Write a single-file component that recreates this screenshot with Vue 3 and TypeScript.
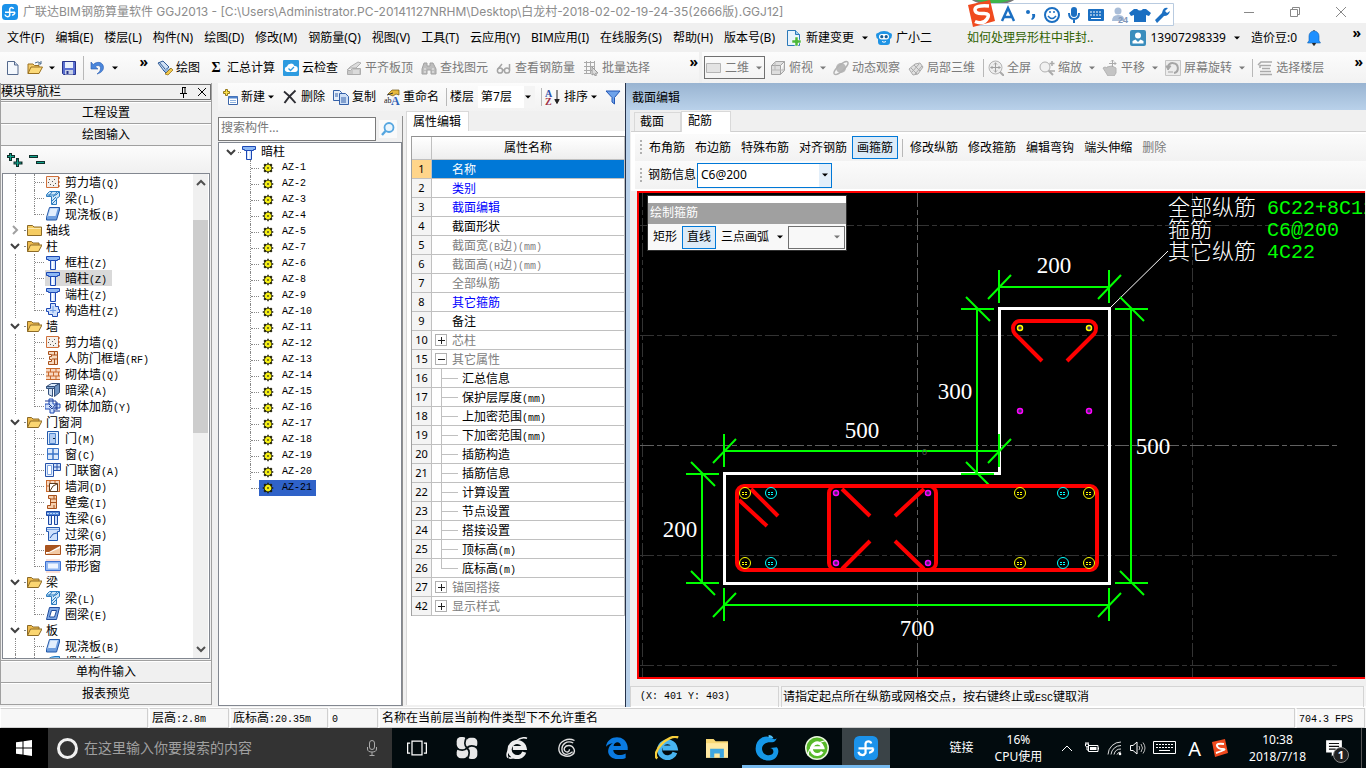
<script setup lang="ts">
import { h, ref } from 'vue'

type Dir = 'h' | 'v'
interface Dim { dir: Dir; at: number; from: number; to: number; label: string; lx: number; ly: number }
interface Node { icon: string; text: string; level: number; open?: boolean; on?: boolean; last?: boolean }
interface Tool { icon?: string; text: string; off?: boolean; arrow?: boolean; sepBefore?: boolean }

/* Inner markup of the 16 x 16 icons */
const icons: Record<string, string> = {
  app: '<rect width="16" height="16" rx="3.500" fill="#1b92ea"/><path d="M11.500 5A2 2 0 0 0 7.700 5v6.300A2.500 2.500 0 0 1 3 10.500M3 8.300h10M12.800 8.300A2.600 2.600 0 0 1 10 11" fill="none" stroke="#fff" stroke-width="1.500"/>',
  doc: '<path d="M2.500 1.500h7l3.500 3.500v9.500H2.500z" fill="#f4f8fd" stroke="#54698c"/><path d="M9.500 1.500V5H13" fill="#cfdced" stroke="#54698c"/>',
  open: '<path d="M1 13.500V4h5l1.500 1.500H12V7" fill="#f4cd6b" stroke="#9b7120"/><path d="M1 13.500 4 7h11.500l-3.500 6.500z" fill="#fbd978" stroke="#9b7120"/><path d="M8 3q3-2.500 6 .5m0-2.500V4h-3" fill="none" stroke="#4a6b8d"/>',
  save: '<path d="M1.500 1.500h13v13h-12l-1-1z" fill="#5a6fd0" stroke="#27348b"/><path d="M4 2h8v6H4z" fill="#e9f0fb"/><path d="M4 10h8v4.500H4z" fill="#c7d0e6"/><path d="M5.500 11h2v3h-2z" fill="#27348b"/>',
  undo: '<path d="M1 2v7h7L5.300 6.700C8 4.500 11 5.500 10.500 9c-.3 2-1.500 3.500-3.500 5 4-1 6.500-3.500 6.500-6.500C13.500 2.500 7.500.5 3.300 4.500z" fill="#4a86dc" stroke="#2a5cb0" stroke-width=".6"/>',
  paint: '<path d="M1 3l5-2 6 6-5 4z" fill="#cfe0f4" stroke="#2d5a96"/><path d="M2 2l6 7" stroke="#2d5a96"/><path d="M6 10l3 3 5-5" fill="#8fb2de" stroke="#2d5a96"/><path d="M14 8l2 2-5 5-3-1z" fill="#f2c84c" stroke="#8c6a10" stroke-width=".7"/>',
  cloud: '<rect width="16" height="16" rx="1" fill="#2d9be0"/><path d="M4 12a2.800 2.800 0 0 1 0-5.500A4 4 0 0 1 11.500 6a3 3 0 0 1 .5 6z" fill="#fff"/><path d="M5.500 8.500l2 2 3.500-3.500" fill="none" stroke="#2d9be0" stroke-width="1.300"/>',
  align: '<path d="M1 10l3-3 8-5 3 1-5 5H4z" fill="#dcdcdc" stroke="#b0b0b0"/><path d="M1.500 14.500v-4h3l2-2h8v6z" fill="#c8c8c8" stroke="#adadad"/><path d="M8 10v4M10 10v4M12 10v4" stroke="#eee"/>',
  binoc: '<path d="M3 3h3v3h3V3h3l3 6v5h-5v-4H6v4H1V9z" fill="#bdbdbd" stroke="#a2a2a2"/><path d="M3 9h2M11 9h2M3 12h2M11 12h2" stroke="#eee"/>',
  glasses: '<g fill="none" stroke="#a4a4a4" stroke-width="1.500"><circle cx="4" cy="10.500" r="2.600"/><circle cx="11" cy="10.500" r="2.600"/><path d="M6.500 10h2M2 9l4-5M13.500 10V4"/></g>',
  batch: '<path d="M1 2.500h11M1 6.500h11M1 10.500h9M3.500 1v13M7.500 1v13M11.500 1v8M1 13.500h7" stroke="#aaa"/><path d="M9 7l6 6-2.500.3 1 2-1.500.5-1-2L9 15z" fill="#ddd" stroke="#999"/>',
  rect: '<path d="M.5 3.500h14v9H.5z" fill="#e3e3e3" stroke="#b5b5b5"/>',
  cube: '<path d="M1.500 5.500h9v9h-9zM1.500 5.500l4-4h9l-4 4M14.500 1.500v9l-4 4" fill="#dedede" stroke="#a4a4a4"/><path d="M5 2v8H1.500M5 10h9" fill="none" stroke="#b8b8b8"/>',
  planet: '<circle cx="8" cy="8" r="5" fill="#b9b9b9"/><ellipse cx="8" cy="8" rx="9" ry="3" transform="rotate(-42 8 8)" fill="none" stroke="#b2b2b2" stroke-width="1.300"/>',
  local: '<path d="M1 9l6-5 5-1 3 4-5 7-5 1z" fill="#e0e0e0" stroke="#aaa"/><path d="M3 8l6 6M6 5l6 6M4 12l7-8M7 14l7-8" stroke="#aaa"/>',
  full: '<circle cx="7.500" cy="7.500" r="6.500" fill="#eee" stroke="#b4b4b4"/><path d="M7.500 2.500v10M2.500 7.500h10M6 4.500 7.500 3 9 4.500M6 10.500 7.500 12 9 10.500M4.500 6 3 7.500 4.500 9M10.500 6 12 7.500 10.500 9" fill="none" stroke="#a0a0a0"/><path d="M12 12l4 4" stroke="#aaa" stroke-width="2"/>',
  zoom: '<circle cx="6" cy="7" r="5" fill="#f1f1f1" stroke="#b0b0b0"/><path d="M9.500 10.500 14 15" stroke="#aaa" stroke-width="2"/><path d="M13 1v5M10.500 3.500h5M11 11h5" stroke="#aaa" stroke-width="1.500"/>',
  pan: '<path d="M1 8q2-2 4 0V7l5-1 4 2v5l-2 3H6z" fill="#c4c4c4" stroke="#b4b4b4"/><path d="M10.500 0v7M7 3.500h7M9 1.500 10.500 0 12 1.500M12.500 2 14 3.500 12.500 5" fill="none" stroke="#aaa"/>',
  rotate: '<path d="M.5.5h15v15H.5z" fill="#ececec" stroke="#c4c4c4"/><path d="M3 7a5 5 0 1 1 6 6" fill="none" stroke="#a5a5a5" stroke-width="2"/><path d="M1 6h5L3 10zM3 12h5" fill="#a5a5a5" stroke="#a5a5a5"/>',
  floors: '<path d="M1 5l3-3h11M3 5.500h11M5 8.500h8M3 11.500h11M3 14.500h12M3 5v3" fill="none" stroke="#aaa" stroke-width="1.500"/>',
  change: '<path d="M1.500.5h8l4 4v11h-12z" fill="#e8f3fc" stroke="#2b79b9"/><path d="M9.500.5v4h4" fill="#9ccbee" stroke="#2b79b9"/><path d="M9 7h3v3h3v3h-3v3H9v-3H6v-3h3z" fill="#4db83a" stroke="#fff" stroke-width=".5"/>',
  owl: '<path d="M0 5q0-2 2-2 2-2 6-2t6 2q2 0 2 2 0 3-2 4v3q0 3-3 3H5q-3 0-3-3V9Q0 8 0 5z" fill="#1f93e4"/><rect x="3" y="4" width="10" height="5.500" rx="2.700" fill="#fff"/><circle cx="5.800" cy="6.700" r="1.600" fill="#155b95"/><circle cx="10.200" cy="6.700" r="1.600" fill="#155b95"/><path d="M6 11.500q2 1.500 4 0" fill="none" stroke="#fff"/>',
  user: '<rect width="16" height="16" rx="2" fill="#3a8dbd"/><circle cx="8" cy="5.500" r="3" fill="#fff"/><path d="M2.500 13.500V11l3-1.500L8 12l2.500-2.500 3 1.500v2.500z" fill="#fff"/>',
  bell: '<path d="M3 10.500V6a5 5 0 0 1 10 0v4.500l1.500 2.500h-13z" fill="#1e90ff" stroke="#1463b0" stroke-width=".6"/><path d="M8 0v1M6.500 13.500h3l-1.500 2z" stroke="#222" fill="#222"/>',
  add: '<path d="M3.500.5h2v2h2v2h-2v2h-2v-2h-2v-2h2z" fill="#ffe34a" stroke="#94791a"/><path d="M6.500 7.500h9v8h-9z" fill="#fff" stroke="#3b65a8"/><path d="M6.500 7.500h9v2h-9z" fill="#4f83cc"/><path d="M8 11.500h6M8 13.500h6" stroke="#8fb3e0"/>',
  del: '<path d="M2 2.500Q8 7 13.500 14M13.500 1.500Q7 7 2.500 14" fill="none" stroke="#2d2d33" stroke-width="1.900"/>',
  copy: '<path d="M.5 1.500h6l2 2v8h-8z" fill="#e4eefb" stroke="#3561a8"/><path d="M6.500 4.500h6l3 3v8h-9z" fill="#cfe0f7" stroke="#3561a8"/><path d="M2 5h3M2 7h3M8 9h5M8 11h5M8 13h5" stroke="#3561a8"/>',
  rename: '<path d="M4 5l4-4h7v5l-3-1-3 2z" fill="#e7b93c" stroke="#6d5410" stroke-width=".7"/><path d="M3 6l6-2" stroke="#333"/><text x="0" y="14" font-size="8" font-family="Liberation Serif, serif" fill="#222">ab</text><text x="7" y="16" font-size="12" font-weight="bold" font-family="Liberation Serif, serif" fill="#2d62b8">A</text>',
  az: '<text x="0" y="7.500" font-size="10" font-weight="bold" font-family="Liberation Serif, serif" fill="#2b4fa8">A</text><text x="0" y="16" font-size="10" font-weight="bold" font-family="Liberation Serif, serif" fill="#a03048">Z</text><path d="M12 1v12M9.800 10.500l2.200 4 2.200-4z" stroke="#222" fill="#222"/>',
  funnel: '<path d="M1 2h14L9.500 8.500V15L7 13V8.500z" fill="#6fa3ea" stroke="#2457b5"/>',
  search: '<circle cx="9" cy="6.500" r="4.500" fill="#eaf5fd" stroke="#55a6e0" stroke-width="1.800"/><path d="M5.500 10 2 14" stroke="#55a6e0" stroke-width="2.400"/>',
  folder: '<path d="M1.500 13.500v-10h5l1.500 1.500h7.500v8.500z" fill="#f5cc62" stroke="#8c6a26"/><path d="M2 6.500h13" stroke="#fde9ae"/>',
  folderOpen: '<path d="M1.500 13.500v-10h4l1.500 1.500h6v2" fill="#eebb4d" stroke="#8c6a26"/><path d="M1.500 13.500 4.500 7h11.500l-3.500 6.500z" fill="#fbd671" stroke="#8c6a26"/>',
  wall: '<path d="M1.500 2.500h12v11h-12z" fill="#f4f0ec" stroke="#d0703a"/><path d="M4 5h1v1H4zM7 7h1v1H7zM5 10h1v1H5zM9 5h1v1H9zM10 9h1v1h-1zM8 11h1v1H8zM3 8h1v1H3z" fill="#555"/><path d="M13 4h2M13 8h2M13 12h2" stroke="#a04010"/>',
  beam: '<path d="M1.500 4.500l3-3h10v5l-3 2v6h-5v-8h-5z" fill="#cde6f8" stroke="#2d7cc0"/><path d="M2 5h9l3-3M3 7l4-5M8 7l4-5M7 11l4-4M7 14l4-4" fill="none" stroke="#2d7cc0"/>',
  slab: '<path d="M4.500 1.500h10l-3 10h-10z" fill="#bed8f8" stroke="#2358a8"/><path d="M1.500 11.500v2.500h10l3-10V1.500" fill="#6f9fe0" stroke="#2358a8"/><path d="M5.500 3h7l-2 7h-7z" fill="#e3effd"/>',
  column: '<path d="M1.500 2.500h13v3h-2v1h-9v-1h-2z" fill="#8db8f5" stroke="#1c48b4"/><path d="M5.500 6.500h5v9h-5z" fill="#cfe1fc" stroke="#1c48b4"/><path d="M7 7h1.500v8H7z" fill="#fff"/>',
  gz: '<path d="M5.500 1.500h5v3h3v3h1v3h-2v4h-5v-2h-4v-3h-2v-3h4z" fill="#cfe0fb" stroke="#1c48b4"/><path d="M8 4v7M5 8.500h6" stroke="#6f9be6"/>',
  rf: '<path d="M3.500 1.500h9v13h-9v-3h3v-2h-2v-3h2v-2h-3z" fill="#f6d9bf" stroke="#a8501a"/><path d="M7 5h5M7 9h5M9.500 2v3M9.500 9v5" stroke="#a8501a"/>',
  brick: '<path d="M1 2h14v12H1z" fill="#f8d8c0"/><path d="M1 2.500h14M1 6h14M1 10h14M1 13.500h14M5.500 3v3M11 3v3M3.500 6v4M8.500 6v4M13.500 6v4M5.500 10v4M11 10v4" stroke="#c8692c"/>',
  dbeam: '<path d="M1.500 4.500l5-3h8l-5 3z" fill="#dcebfb" stroke="#334e78"/><path d="M1.500 4.500h8v2h-8z" fill="#86a9d2" stroke="#334e78"/><path d="M3.500 6.500h4v8l-4-2z" fill="#cfe0f4" stroke="#334e78"/><path d="M9.500 4.500l5-3v9l-5 4z" fill="#6e93c2" stroke="#334e78"/>',
  rebar: '<path d="M4 1h4v5h7v4H9v5H5v-4H0V6h4z" fill="#cfe0fb" stroke="#1c48b4"/><path d="M0 3h11v9M4 8l3 3 3-4M4 6l3 3M12 4v8M9 13h6" fill="none" stroke="#1c3a94"/>',
  door: '<path d="M2.500 1.500h11v13h-11z" fill="#e6f0fd" stroke="#2358a8"/><path d="M4.500 3.500h6v10h-6z" fill="#b3cdf3" stroke="#4f86d0"/><path d="M8 8.500h2" stroke="#123"/>',
  win: '<path d="M2.500 2.500h11v11h-11z" fill="#dce9fb" stroke="#3b74c8"/><path d="M8 2v12M2 8h12" stroke="#3b74c8" stroke-width="1.500"/>',
  dwin: '<path d="M.5 1.500h8v13h-8z" fill="#e6f0fd" stroke="#2450a8"/><path d="M2.500 3.500h4v9h-4z" fill="#fff" stroke="#7fa6e3"/><path d="M8.500 1.500h7v7h-7zM12 1.500v7M8.500 5h7" fill="#cfe0fb" stroke="#2450a8"/>',
  hole: '<path d="M1 2h14v12H1z" fill="#f8d8c0"/><path d="M1 2.500h14M1 13.500h14M1.500 2v12M14.500 2v12M5 2v3M10 2v3M1 8h3" stroke="#c8692c"/><path d="M4.500 5.500h8v8h-8zM5 13l3-5 4-2" fill="#fff" stroke="#5b3a1c"/>',
  niche: '<path d="M3.500 1.500h8v13h-9v-3h3v-7h-2z" fill="#f6d0ae" stroke="#a8501a"/><path d="M6 5h6M6 8.500h6M9 1.500V5M9 11v3" stroke="#a8501a"/>',
  lbeam: '<path d="M1.500 1.500h13v4h-13z" fill="#4f86d8" stroke="#1c48a4"/><path d="M3.500 5.500h3v9h-3zM9.500 5.500h3v9h-3z" fill="#cfe1fc" stroke="#1c48a4"/><path d="M2 3.500h12" stroke="#b9d3f8" stroke-dasharray="2 1"/>',
  gbeam: '<path d="M1.500 1.500h13v4h-2v9h-9v-9h-2z" fill="#cfe1fc" stroke="#2358b0"/><path d="M2 3.500h12" stroke="#7fa6e3"/><path d="M5 12l3-4 4-1" fill="none" stroke="#2358b0"/>',
  shole: '<path d="M.5 3.500h15v9H.5z" fill="#fff" stroke="#a8501a"/><path d="M1 4h14L4 10H1z" fill="#a9551f"/><path d="M6 10l9-4v6H1z" fill="#f2c9a4"/>',
  swin: '<path d="M1 1h14v14H1z" fill="#fbdfd6"/><path d="M.5 3.500h15v9H.5z" fill="#8fb6f2" stroke="#3b6fd0"/><path d="M3 5.500h10v5H3z" fill="#eef5ff"/>',
  ring: '<path d="M4.500 1.500h10l-3 12h-10z" fill="#7fa9e6" stroke="#1f4c9c"/><path d="M6.500 4.500h5l-2 6.500h-5z" fill="#fff" stroke="#1f4c9c"/>',
  spiral: '<path d="M1 10Q2 3 10 2.500h4.500v4Q8 6 6 12z" fill="#8cc7f4" stroke="#2078c0"/>',
  gear: '<path d="M7 1h2v2h2l1-1 2 2-1 1v2h2v2h-2v2l1 1-2 2-1-1H9v2H7v-2H5l-1 1-2-2 1-1V9H1V7h2V5L2 4l2-2 1 1h2z" fill="#1a1a00"/><path d="M6 4h4l2 2v4l-2 2H6l-2-2V6z" fill="#f6f014"/><path d="M7 7h2v2H7z" fill="#222"/><path d="M8 3v2M8 11v2M3 8h2M11 8h2" stroke="#f6f014"/>',
  plus: '<path d="M3.500 1v8M0 4.500h8M10.500 6v9M6.500 11h9" stroke="#10302c" stroke-width="3"/><path d="M3.500 2v6M1 4.500h6M10.500 7.500v6.500M7.500 11H14" stroke="#12a38c"/>',
  minus: '<path d="M0 4.500h9M7 10.500h9" stroke="#10302c" stroke-width="3"/><path d="M1 4.500h7M8 10.500h7" stroke="#12a38c"/>',
  win10: '<path d="M0 2.300 6.500 1.400V7.500H0zM7.500 1.200 16 0v7.500H7.500zM0 8.500h6.500v6.100L0 13.700zM7.500 8.500H16V16l-8.500-1.200z" fill="#fff"/>',
  mic: '<rect x="5.500" y=".5" width="5" height="9" rx="2.500" fill="none" stroke="#aaa"/><path d="M3.500 7v2q0 3 4.500 3t4.500-3V7M8 12v3.500M5.500 15.500h5" fill="none" stroke="#aaa"/>',
  taskview: '<path d="M4 2.500h8v11H4zM2.500 4H.5v8h2M13.500 4h2v8h-2" fill="none" stroke="#fff" stroke-width="1"/>',
  pinwheel: '<rect x=".5" width="7.500" height="8.500" rx="3" fill="#e8e8e8"/><rect x="7.500" y=".5" width="8" height="7.500" rx="3" fill="#e8e8e8"/><rect x="8" y="7.500" width="7.500" height="8.500" rx="3" fill="#e8e8e8"/><rect x=".5" y="8" width="8" height="7.500" rx="3" fill="#e8e8e8"/><path d="M8 8Q5 5.500 7.700 0M8 8Q10.500 5 16 7.700M8 8Q11 10.500 8.300 16M8 8Q5.500 11 0 8.300" fill="none" stroke="#071114" stroke-width="1.200"/>',
  ewhite: '<path d="M13.300 11A5.500 5.500 0 1 1 13.500 8H5" fill="none" stroke="#eee" stroke-width="3"/><path d="M1.500 15C-2 11 9-2 15.300 1M2 15q2 1 5-1" fill="none" stroke="#eee" stroke-width="1.200"/>',
  swirl: '<path d="M14 2C9-.5 2 2 1.500 8S8 16 12 13.500 13 6 9.500 6 5 9 6.500 10.500 10 11 10 9M13 4C8 1.500 3.500 5 4 9.500S9 14 12.500 11" fill="none" stroke="#e0e0e0" stroke-width="1.100"/>',
  edge: '<path d="M0 7C1-2 15-2.500 15.800 7.500V9.500H5.300c.3 4 5 4.500 9 2.500v3.200C8 18-.5 15 2 8c1-2.500 3-3.500 3-3.500S2 4.800 0 7zM5.500 6.500h5.300C10.700 3 6 3 5.500 6.500z" fill="#0a7ae0"/>',
  ie: '<path d="M13.300 11A5.300 5.300 0 1 1 13.500 8H5" fill="none" stroke="#48b4f0" stroke-width="3.200"/><path d="M1.500 15C-3 11 9-2 15.500 1" fill="none" stroke="#f8cf3c" stroke-width="1.600"/>',
  explorer: '<path d="M0 1.500h5.500L7 3h9v12H0z" fill="#f7d775"/><path d="M0 4.500h16V15H0z" fill="#ffe9a2"/><path d="M3 15V8.500h10V15h-3v-3H6v3z" fill="#3ea6e0"/>',
  glodon: '<path d="M12 2.500Q9 0 5 1.500 1 3.500 1 8.500c0 5 5 8 9.500 7S16 9 14 7.500L10 8c2.500.5 2.500 3.500.5 4.200S5.500 12 5 9s2.500-5 6-4.500q2 .2 3-2.500-1 .8-2 .5z" fill="#1597e8"/><path d="M9 0q2 0 3 2l-3-.5z" fill="#54c4f8"/>',
  egreen: '<circle cx="8" cy="8" r="7.500" fill="#57b929" stroke="#e8f5dd"/><path d="M11.500 10.500A3.900 3.900 0 1 1 12 7.900H5" fill="none" stroke="#fff" stroke-width="2"/><path d="M2 13Q2 6 14 3" fill="none" stroke="#fff" stroke-width=".8"/>',
  power: '<path d="M4.500 5.500H14v6H4.500zM14.500 7.500v2M1 4h4M2 2v2M4 2v2M1.500 4v2l1.500 1 1.500-1V4M3 7v3h1" fill="none" stroke="#fff"/><path d="M6 7h6.500v3H6z" fill="#fff"/>',
  wifi: '<path d="M1 14.500A13 13 0 0 1 14 2M4 14.500A10 10 0 0 1 14 5.500M7 14.500A7 7 0 0 1 14 9M10 14.500A4 4 0 0 1 14 12" fill="none" stroke="#ddd"/><circle cx="13" cy="14" r="1.300" fill="#fff"/>',
  sound: '<path d="M.5 5.500h2.500l4-3.500v12L3 10.500H.5z" fill="none" stroke="#fff"/><path d="M9 6q1.500 2 0 4M11 4q3 4 0 8M13 2.500q4 5.500 0 11" fill="none" stroke="#bbb"/>',
  note: '<path d="M1 1h14v11H9l-3 3.500V12H1z" fill="#fff"/><path d="M3.500 4h9M3.500 6.500h9M3.500 9h6" stroke="#111"/>'
}

const Icon = (p: { n: string; s?: number }) =>
  h('svg', { class: 'ico', viewBox: '0 0 16 16', width: p.s ?? 16, height: p.s ?? 16, innerHTML: icons[p.n], 'aria-hidden': 'true' })
Icon.props = ['n', 's']

/* Sets Latin runs in the half-width face beside full-width characters */
const Mix = (p: { t: string }) =>
  h('span', { class: 'mix' }, (p.t.match(/[\x20-\x7e]+|[^\x20-\x7e]+/g) ?? []).map(r => h('span', { class: r.charCodeAt(0) < 127 ? 'half' : 'wide' }, r)))
Mix.props = ['t']

const Caret = () => h('svg', { class: 'caret', width: 6, height: 4, viewBox: '0 0 6 4' }, [h('path', { d: 'M0 .5h6L3 3.500z', fill: 'currentColor' })])

const menus = ['文件(F)', '编辑(E)', '楼层(L)', '构件(N)', '绘图(D)', '修改(M)', '钢筋量(Q)', '视图(V)', '工具(T)', '云应用(Y)', 'BIM应用(I)', '在线服务(S)', '帮助(H)', '版本号(B)']
const drawTools: Tool[] = [
  { icon: 'paint', text: '绘图' }, { icon: 'sigma', text: '汇总计算' }, { icon: 'cloud', text: '云检查' },
  { icon: 'align', text: '平齐板顶', off: true }, { icon: 'binoc', text: '查找图元', off: true },
  { icon: 'glasses', text: '查看钢筋量', off: true }, { icon: 'batch', text: '批量选择', off: true }
]
const viewTools: Tool[] = [
  { icon: 'cube', text: '俯视', arrow: true }, { icon: 'planet', text: '动态观察' }, { icon: 'local', text: '局部三维' },
  { icon: 'full', text: '全屏', sepBefore: true }, { icon: 'zoom', text: '缩放', arrow: true }, { icon: 'pan', text: '平移', arrow: true },
  { icon: 'rotate', text: '屏幕旋转', arrow: true }, { icon: 'floors', text: '选择楼层', sepBefore: true }
]
const n = (icon: string, text: string, extra: Partial<Node> = {}): Node => ({ icon, text, level: 1, ...extra })
const g = (text: string, open = true): Node => ({ icon: open ? 'folderOpen' : 'folder', text, level: 0, open })
const tree: Node[] = [
  n('wall', '剪力墙(Q)'), n('beam', '梁(L)'), n('slab', '现浇板(B)', { last: true }),
  g('轴线', false), g('柱'),
  n('column', '框柱(Z)'), n('column', '暗柱(Z)', { on: true }), n('column', '端柱(Z)'), n('gz', '构造柱(Z)', { last: true }),
  g('墙'),
  n('wall', '剪力墙(Q)'), n('rf', '人防门框墙(RF)'), n('brick', '砌体墙(Q)'), n('dbeam', '暗梁(A)'), n('rebar', '砌体加筋(Y)', { last: true }),
  g('门窗洞'),
  n('door', '门(M)'), n('win', '窗(C)'), n('dwin', '门联窗(A)'), n('hole', '墙洞(D)'), n('niche', '壁龛(I)'), n('lbeam', '连梁(G)'), n('gbeam', '过梁(G)'), n('shole', '带形洞'), n('swin', '带形窗', { last: true }),
  g('梁'), n('beam', '梁(L)'), n('ring', '圈梁(E)', { last: true }),
  g('板'), n('slab', '现浇板(B)'), n('spiral', '螺旋板(B)')
]
const parts = [1, 2, 3, 4, 5, 7, 6, 8, 9, 10, 11, 12, 13, 14, 15, 16, 17, 18, 19, 20, 21]
const selectedPart = ref(21)

interface Prop { no: number; text: string; kind?: 'key' | 'dim' | 'sel'; box?: '+' | '-'; sub?: boolean; end?: boolean }
const props: Prop[] = [
  { no: 1, text: '名称', kind: 'sel' }, { no: 2, text: '类别', kind: 'key' }, { no: 3, text: '截面编辑', kind: 'key' }, { no: 4, text: '截面形状' },
  { no: 5, text: '截面宽(B边)(mm)', kind: 'dim' }, { no: 6, text: '截面高(H边)(mm)', kind: 'dim' }, { no: 7, text: '全部纵筋', kind: 'dim' },
  { no: 8, text: '其它箍筋', kind: 'key' }, { no: 9, text: '备注' }, { no: 10, text: '芯柱', kind: 'dim', box: '+' }, { no: 15, text: '其它属性', kind: 'dim', box: '-' },
  ...['汇总信息', '保护层厚度(mm)', '上加密范围(mm)', '下加密范围(mm)', '插筋构造', '插筋信息', '计算设置', '节点设置', '搭接设置', '顶标高(m)', '底标高(m)']
    .map((text, i): Prop => ({ no: 16 + i, text, sub: true, end: i === 10 })),
  { no: 27, text: '锚固搭接', kind: 'dim', box: '+' }, { no: 42, text: '显示样式', kind: 'dim', box: '+' }
]
const rebarTools = ['布角筋', '布边筋', '特殊布筋', '对齐钢筋', '画箍筋', '修改纵筋', '修改箍筋', '编辑弯钩', '端头伸缩', '删除']

/* Section drawing */
const dims: Dim[] = [
  { dir: 'h', at: 94, from: 360, to: 470, label: '200', lx: 415, ly: 80 },
  { dir: 'v', at: 338, from: 116, to: 281, label: '300', lx: 316, ly: 206 },
  { dir: 'h', at: 258, from: 85, to: 360, label: '500', lx: 223, ly: 245 },
  { dir: 'v', at: 492, from: 116, to: 390, label: '500', lx: 514, ly: 261 },
  { dir: 'v', at: 63, from: 281, to: 390, label: '200', lx: 41, ly: 344 },
  { dir: 'h', at: 412, from: 85, to: 470, label: '700', lx: 278, ly: 443 }
]
const dimPath = (d: Dim) => {
  const ends = [d.from, d.to]
  return d.dir === 'h'
    ? `M${d.from} ${d.at}H${d.to}` + ends.map(x => `M${x} ${d.at - 17}v33M${x - 11} ${d.at + 12}l23-24`).join('')
    : `M${d.at} ${d.from}V${d.to}` + ends.map(y => `M${d.at - 16} ${y}h33M${d.at - 11} ${y - 12}l24 24`).join('')
}
const bars = [106, 132, 381, 424, 450].flatMap((x, i) => [300, 370].map(y => ({ x, y, c: i === 1 || i === 3 ? '#00ffff' : '#ffff00' })))
const dots = [
  { x: 381, y: 135, c: '#ffff00' }, { x: 450, y: 135, c: '#ffff00' }, { x: 381, y: 218, c: '#ff00ff' }, { x: 450, y: 218, c: '#ff00ff' },
  ...[197, 289].flatMap(x => [300, 370].map(y => ({ x, y, c: '#ff00ff' })))
]
const gridY = [32, 142, 362, 472]
</script>

<template>
  <div class="screen">
    <header class="title">
      <Icon n="app" />
      <span class="caption">广联达BIM钢筋算量软件 GGJ2013 - [C:\Users\Administrator.PC-20141127NRHM\Desktop\白龙村-2018-02-02-19-24-35(2666版).GGJ12]</span>
      <div class="winbtns">
        <button aria-label="最小化"><svg width="12" height="12"><path d="M1 6.500h10" /></svg></button>
        <button aria-label="还原"><svg width="12" height="12"><path d="M1.500 3.500h7v7h-7zM3.500 3.500v-2h7v7h-2" /></svg></button>
        <button aria-label="关闭"><svg width="12" height="12"><path d="M1 1l10 10M11 1L1 11" /></svg></button>
      </div>
      <div class="ime">
        <svg width="208" height="27" viewBox="0 0 208 27">
          <ellipse cx="25" cy="-6" rx="24" ry="10" fill="#3db54a" stroke="#777" stroke-width="2" />
          <path d="M8.500 3.500h197v22H8.500z" fill="#fff" stroke="#b9cbe0" />
          <path d="M0 5 22 0l5 21-22 6z" fill="#f04a1e" />
          <path d="M21 6Q7 5 7 9.500t8 4 4 5.500-12 2.500" fill="none" stroke="#fff" stroke-width="3.500" />
          <g fill="none" stroke="#1b6fc2" stroke-width="2">
            <path d="M34 21 40 8l6 13M36 17h8" stroke-width="2.500" />
            <circle cx="84" cy="15" r="7" /><path d="M80 16q4 5 8 0" stroke-width="1.500" />
            <path d="M101 13q0 6 5 6t5-6M106 19v4" />
          </g>
          <g fill="#1b6fc2">
            <circle cx="60" cy="12" r="2" /><path d="M64 14h3q1 4-3 6l-1-1q2-1 1-5z" />
            <circle cx="82" cy="12" r="1" /><circle cx="86" cy="12" r="1" />
            <rect x="103" y="7" width="6" height="10" rx="3" />
            <rect x="120" y="9" width="16" height="12" rx="1" />
            <path d="M169 9h-3l-5 4 2 3 3-1v7h12v-7l3 1 2-3-5-4h-3q-3 3-6 0z" />
            <path d="M200 8q-5-1-6 5l-7 7 2 3 7-7q5 0 6-5l-3 2-2-2z" />
          </g>
          <path d="M122 12h12M122 15h12" stroke="#fff" stroke-dasharray="2 1" /><path d="M123 18.500h10" stroke="#fff" />
          <g fill="#a9bdd8"><circle cx="150" cy="11" r="3.500" /><path d="M144 21q0-6 6-6t6 4v2z" /></g>
          <text x="150" y="23" class="imenum">24</text>
        </svg>
      </div>
    </header>

    <nav class="menu">
      <button v-for="m in menus" :key="m">{{ m }}</button>
      <button class="withicon"><Icon n="change" />新建变更<Caret /></button>
      <button class="withicon owl"><Icon n="owl" />广小二</button>
      <a href="#" class="tip">如何处理异形柱中非封..</a>
      <button class="withicon acct"><Icon n="user" />13907298339<Caret /></button>
      <span class="bean">造价豆:0</span>
      <button aria-label="消息"><Icon n="bell" /></button>
      <span class="more">»</span>
    </nav>

    <div class="bars">
      <div class="bar file">
        <button aria-label="新建"><Icon n="doc" /></button>
        <button aria-label="打开"><Icon n="open" /></button><Caret />
        <button aria-label="保存"><Icon n="save" /></button><i class="sep tall" />
        <button aria-label="撤销"><Icon n="undo" /></button><Caret />
        <span class="more">»</span>
      </div>
      <div class="bar draw">
        <button v-for="t in drawTools" :key="t.text" :class="{ off: t.off }">
          <b v-if="t.icon === 'sigma'" class="sigma">Σ</b><Icon v-else :n="t.icon!" />{{ t.text }}
        </button>
        <span class="more">»</span>
      </div>
      <div class="bar view">
        <button class="combo off"><Icon n="rect" />二维<Caret /></button>
        <template v-for="t in viewTools" :key="t.text">
          <i v-if="t.sepBefore" class="sep" />
          <button class="off"><Icon :n="t.icon!" />{{ t.text }}<Caret v-if="t.arrow" /></button>
        </template>
        <span class="more">»</span>
      </div>
    </div>

    <main class="work">
      <aside class="nav">
        <div class="navhead">
          <span>模块导航栏</span>
          <svg width="28" height="12"><path d="M3.500 1v6M1 7.500h7M6 1v6M4 1.500h3M4.500 8v4" stroke="#000" fill="none" /><path d="M19 2l8 8M27 2l-8 8" stroke="#000" /></svg>
        </div>
        <button class="section">工程设置</button>
        <button class="section">绘图输入</button>
        <div class="expand"><Icon n="plus" /><Icon n="minus" /></div>
        <div class="treebox">
          <ul class="tree" role="tree">
            <li v-for="(t, i) in tree" :key="i" :class="['l' + t.level, { on: t.on, last: t.last }]" role="treeitem">
              <span v-if="t.level" class="stem"><i /></span>
              <svg v-else class="chev" :class="{ shut: !t.open }" width="10" height="8"><path d="M1 2l4 4 4-4" /></svg>
              <span class="leaf"><Icon :n="t.icon" /><Mix :t="t.text" /></span>
            </li>
          </ul>
          <div class="scroll">
            <svg width="10" height="8"><path d="M1 6l4-4 4 4" /></svg>
            <span class="thumb" />
            <svg width="10" height="8"><path d="M1 2l4 4 4-4" /></svg>
          </div>
        </div>
        <button class="section">单构件输入</button>
        <button class="section">报表预览</button>
      </aside>

      <section class="mid">
        <div class="parttools">
          <button><Icon n="add" />新建<Caret /></button>
          <button><Icon n="del" />删除</button>
          <button><Icon n="copy" />复制</button>
          <button><Icon n="rename" />重命名</button>
          <i class="sep" />
          <label for="floor">楼层</label>
          <span class="pick"><select id="floor"><option>第7层</option></select><Caret /></span>
          <i class="sep" />
          <button><Icon n="az" />排序<Caret /></button>
          <button aria-label="过滤"><Icon n="funnel" /></button>
        </div>
        <div class="cols">
          <div class="parts">
            <div class="find"><input type="text" placeholder="搜索构件..." aria-label="搜索构件"><button aria-label="搜索"><Icon n="search" /></button></div>
            <div class="partbox">
              <div class="root"><svg class="chev" width="10" height="8"><path d="M1 2l4 4 4-4" /></svg><i /><Icon n="column" /><span>暗柱</span></div>
              <ul>
                <li v-for="p in parts" :key="p" :class="{ on: p === selectedPart, last: p === 21 }" @click="selectedPart = p">
                  <i /><span><Icon n="gear" :s="12" />AZ-{{ p }}</span>
                </li>
              </ul>
            </div>
          </div>
          <div class="props">
            <div class="ptabs"><button>属性编辑</button></div>
            <div class="pwrap">
              <table>
                <thead><tr><th class="no" /><th>属性名称</th></tr></thead>
                <tbody>
                  <tr v-for="p in props" :key="p.no" :class="[p.kind, { sub: p.sub, end: p.end }]">
                    <td class="no">{{ p.no }}</td>
                    <td class="name"><i v-if="p.box" class="box" :class="{ plus: p.box === '+' }" /><i v-if="p.sub" class="branch" /><Mix :t="p.text" /></td>
                  </tr>
                </tbody>
              </table>
            </div>
          </div>
        </div>
      </section>

      <section class="editor">
        <h2>截面编辑</h2>
        <div class="etabs"><button>截面</button><button class="cur">配筋</button></div>
        <div class="etools">
          <div class="row">
            <i class="grip" />
            <template v-for="t in rebarTools" :key="t">
              <button :class="{ cur: t === '画箍筋', off: t === '删除' }">{{ t }}</button>
              <i v-if="t === '画箍筋'" class="sep" />
            </template>
          </div>
          <div class="row info">
            <i class="grip" />
            <label for="bar">钢筋信息</label>
            <span class="pick"><select id="bar"><option>C6@200</option></select><Caret /></span>
          </div>
        </div>
        <div class="canvas">
          <svg class="drawing">
            <g class="axis">
              <path v-for="y in gridY" :key="y" :d="`M1 ${y}.5H700`" />
              <path d="M3.500 0V485M553.500 0V485" />
              <path class="main" d="M1 252.500H700M278.500 0V485" />
            </g>
            <path class="wallline" d="M85.500 280.500H360.500V115.500H470.500V390.500H85.500Z" />
            <path class="lead" d="M471 115L529 58" />
            <path v-for="(d, i) in dims" :key="i" class="dim" :d="dimPath(d)" />
            <g class="stirrup">
              <rect x="98" y="293" width="360" height="84" rx="7" />
              <rect x="190" y="293" width="107" height="84" rx="7" />
              <path d="M112 296L139 323M100 307L128 333M203 296L231 323M285 296L256 323M231 348L203 376M256 348L285 376" />
              <path d="M403 168L376 141Q374 139 374 135A7 7 0 0 1 381 128H450A7 7 0 0 1 457 135Q457 139 455 141L428 168" />
            </g>
            <g v-for="(b, i) in bars" :key="'b' + i" :stroke="b.c" fill="none">
              <circle :cx="b.x" :cy="b.y" r="5.500" />
              <path :d="`M${b.x - 3} ${b.y - 1}.5h6M${b.x - 3} ${b.y + 1}.5h6`" stroke-dasharray="2 1" />
            </g>
            <circle v-for="(d, i) in dots" :key="'d' + i" :cx="d.x" :cy="d.y" r="2.500" :stroke="d.c" stroke-width="1.500" fill="#403060" />
            <text x="283" y="262" class="origin">0</text>
            <g class="num"><text v-for="(d, i) in dims" :key="i" :x="d.lx" :y="d.ly">{{ d.label }}</text></g>
            <g class="notes">
              <text x="529" y="22">全部纵筋</text><text x="529" y="44">箍筋</text><text x="529" y="66">其它纵筋</text>
              <g class="spec"><text x="628" y="21">6C22+8C12</text><text x="628" y="43">C6@200</text><text x="628" y="65">4C22</text></g>
            </g>
          </svg>
          <div class="palette">
            <div class="ptitle">绘制箍筋</div>
            <div class="pbody">
              <button>矩形</button><button class="cur">直线</button><button>三点画弧<Caret /></button>
              <span class="pick"><select aria-label="画弧方式"><option /></select><Caret /></span>
            </div>
          </div>
        </div>
        <footer class="estatus"><span class="half">(X: 401 Y: 403)</span><Mix t="请指定起点所在纵筋或网格交点，按右键终止或ESC键取消" /></footer>
      </section>
    </main>

    <footer class="status">
      <span /><Mix t="层高:2.8m" /><Mix t="底标高:20.35m" /><Mix t="0" /><Mix t="名称在当前层当前构件类型下不允许重名" /><Mix t="704.3 FPS" />
    </footer>

    <footer class="taskbar">
      <button class="start" aria-label="开始"><Icon n="win10" /></button>
      <label class="tsearch"><i class="cortana" /><input type="text" placeholder="在这里输入你要搜索的内容" aria-label="搜索"><Icon n="mic" /></label>
      <div class="apps">
        <button aria-label="任务视图"><Icon n="taskview" :s="20" /></button>
        <button aria-label="风车"><Icon n="pinwheel" :s="22" /></button>
        <button aria-label="浏览器"><Icon n="ewhite" :s="22" /></button>
        <button aria-label="旋涡"><Icon n="swirl" :s="20" /></button>
        <button aria-label="Edge"><Icon n="edge" :s="22" /></button>
        <button aria-label="IE"><Icon n="ie" :s="24" /></button>
        <button aria-label="资源管理器"><Icon n="explorer" :s="22" /></button>
        <button class="run" aria-label="广联达"><Icon n="glodon" :s="26" /></button>
        <button class="run" aria-label="安全浏览器"><Icon n="egreen" :s="24" /></button>
        <button class="run now" aria-label="钢筋算量"><Icon n="app" :s="24" /></button>
      </div>
      <div class="tray">
        <span class="link">链接</span>
        <span class="two cpu">16%<br>CPU使用</span>
        <svg class="up" width="12" height="8"><path d="M1 7l5-5 5 5" fill="none" stroke="#fff" /></svg>
        <Icon n="power" /><Icon n="wifi" /><Icon n="sound" />
        <svg class="kbd" width="24" height="14"><path d="M.5.5h22v12H.5z" fill="none" stroke="#fff" /><path d="M3 3.500h17M3 6.500h17" stroke="#fff" stroke-dasharray="2 1" /><path d="M6 9.500h11" stroke="#fff" /></svg>
        <span class="lang">A</span>
        <svg class="sg" width="16" height="18"><path d="M0 3l13-3 3 14-13 4z" fill="#f04a1e" /><path d="M12 5Q4 4 5 7t6 3-7 4" fill="none" stroke="#fff" stroke-width="2" /></svg>
        <span class="two clock">10:38<br>2018/7/18</span>
        <span class="bell"><Icon n="note" :s="18" /><b>1</b></span>
      </div>
    </footer>
  </div>
</template>

<style>
html, body { margin: 0; background: #f0f0f0; overflow: hidden; }
.ico { flex: none; display: block; }
.caret { flex: none; display: block; }
.half { font: 10px/10px "Liberation Mono", monospace; white-space: pre; }
.wide { font: 12px/16px "Noto Sans CJK SC", sans-serif; }
.mix { white-space: nowrap; line-height: 16px; }
</style>

<style scoped>
.screen { display: flex; flex-direction: column; height: 100vh; overflow: hidden; background: #f0f0f0; color: #000; font: 12px/16px "Noto Sans", "Noto Sans CJK SC", sans-serif; white-space: nowrap; }
button { display: flex; align-items: center; margin: 0; padding: 0; border: 0; background: none; color: inherit; font: inherit; white-space: nowrap; }
ul { list-style: none; margin: 0; padding: 0; }
select, input { font: inherit; color: inherit; border-radius: 0; }
select { appearance: none; width: 100%; height: 100%; margin: 0; padding: 0 3px; border: 0; background: none; }
.sep { flex: none; width: 1px; height: 18px; background: #b8b8b8; }
.off { color: #7a7a7a; }

.title { position: relative; flex: none; display: flex; align-items: center; gap: 5px; height: 23px; padding-left: 2px; background: #fff; color: #8c8c8c; }
.caption { font-family: Inter, "Noto Sans CJK SC", sans-serif; }
.winbtns { display: flex; gap: 34px; margin-left: auto; padding-right: 19px; }
.winbtns svg { display: block; fill: none; stroke: #888; }
.ime { position: absolute; top: 0; right: 190px; z-index: 3; height: 27px; overflow: hidden; }
.ime svg { display: block; }
.imenum { font: bold 9px "Liberation Sans", sans-serif; fill: #7f97ba; }

.menu { flex: none; display: flex; align-items: center; gap: 11px; height: 29px; padding-left: 7px; }
.withicon { gap: 4px; }
.withicon .caret { margin-left: 4px; }
.owl { margin-left: -3px; }
.tip { margin-left: 24px; color: #2f6200; text-decoration: none; }
.acct { margin-left: 26px; }
.bean { margin-right: -2px; }
.more { margin-left: auto; align-self: flex-start; font: bold 14px/20px "Noto Sans", sans-serif; }
.menu .more { padding-right: 5px; }

.bars { flex: none; display: flex; height: 31px; }
.bar { display: flex; align-items: center; gap: 8px; background: linear-gradient(#fcfcfc, #f2f2f2); }
.bar button { gap: 3px; }
.file { flex: none; width: 143px; gap: 6px; padding: 0 3px 0 5px; }
.tall { height: 24px; }
.draw { flex: none; width: 541px; padding: 0 1px 0 6px; }
.sigma { width: 16px; font: bold 14px/16px "Liberation Serif", serif; text-align: center; }
.view { flex: 1; min-width: 0; padding: 0 3px 0 2px; margin-left: 3px; }
.view .caret { margin: 0 -1px 0 4px; }
.view .combo { height: 23px; margin-right: -3px; padding: 0 3px 0 1px; border: 1px solid #707070; }
.view .sep { margin-right: -4px; }

.work { flex: 1; min-height: 0; display: flex; }
.nav { flex: none; width: 210px; display: flex; flex-direction: column; border: 1px solid #a0a0a0; border-width: 0 1px 1px; margin-bottom: 2px; }
.navhead { display: flex; align-items: center; justify-content: space-between; height: 14px; margin: 1px 0; padding-right: 3px; border: 1px solid #707070; border-left: 0; line-height: 14px; }
.section { flex: none; justify-content: center; height: 22px; border-top: 1px solid #a0a0a0; background: #f0f0f0; box-shadow: inset 0 1px #fff; }
.expand { flex: none; display: flex; align-items: center; gap: 6px; height: 27px; padding-left: 6px; border-top: 1px solid #a0a0a0; background: linear-gradient(#fcfcfc, #f0f0f0); }
.treebox { flex: 1; min-height: 0; display: flex; margin: 0 1px 1px; border: 1px solid #828790; background: #fff; }
.tree { flex: 1; overflow: hidden; }
.tree li { display: flex; align-items: center; height: 16px; }
.leaf { display: flex; align-items: center; gap: 4px; height: 16px; padding-right: 5px; }
.l0 .leaf { gap: 4px; padding-left: 2px; background: linear-gradient(#888, #888) 0 8px / 2px 1px no-repeat; }
.on .leaf { background: #d9d9d9; }
.chev { flex: none; width: 10px; margin: 0 4px 0 7px; fill: none; stroke: #404040; stroke-width: 2; }
.shut { transform: rotate(-90deg); stroke: #a0a0a0; }
.stem { flex: none; position: relative; box-sizing: border-box; width: 30px; height: 16px; margin-left: 12px; border-left: 1px dotted #888; }
.stem i { position: absolute; left: 18px; top: 0; width: 10px; height: 16px; border-left: 1px dotted #888; background: repeating-linear-gradient(90deg, #888 0 1px, transparent 1px 2px) 0 8px / 10px 1px no-repeat; }
.last .stem i { height: 9px; }
.scroll { flex: none; display: flex; flex-direction: column; align-items: center; width: 15px; padding: 5px 0; margin-right: 1px; background: #f0f0f0; }
.scroll svg { flex: none; fill: none; stroke: #505050; stroke-width: 2; }
.thumb { width: 15px; flex: none; height: 45%; margin: 33px 0 auto; background: #cdcdcd; }

.mid { flex: none; width: 407px; margin-left: 6px; display: flex; flex-direction: column; overflow: hidden; }
.parttools { flex: none; display: flex; align-items: center; gap: 4px; height: 28px; padding-left: 4px; background: linear-gradient(#fcfcfc, #f2f2f2); }
.parttools button { gap: 3px; margin-right: 4px; }
.parttools .sep { margin: 0 -1px; }
.pick { position: relative; display: block; }
.pick .caret { position: absolute; right: 4px; top: 50%; margin-top: -2px; pointer-events: none; }
.parttools .pick { width: 64px; height: 22px; margin-right: 3px; background: #fff; box-shadow: inset -11px 0 #f4f4f4; }
.cols { flex: 1; min-height: 0; display: flex; }
.parts { flex: none; width: 185px; display: flex; flex-direction: column; margin: 5px 0 1px; border-right: 1px solid #909090; box-sizing: border-box; }
.find { flex: none; display: flex; align-items: center; height: 26px; }
.find input { box-sizing: border-box; width: 158px; height: 24px; padding: 0 2px 4px; border: 1px solid #7a7a7a; background: #fff; }
.find input::placeholder { color: #777; opacity: 1; }
.find button { margin-left: 3px; padding: 1px; background: #fafafa; }
.partbox { flex: 1; border: 1px solid #828790; background: #fff; padding-top: 1px; }
.root { display: flex; align-items: center; height: 16px; }
.root i { width: 3px; border-top: 1px dotted #888; margin-left: -2px; }
.root span { margin-left: 4px; }
.parts li { display: flex; height: 16px; margin-left: 31px; border-left: 1px dotted #888; font: 10px/16px "Liberation Mono", monospace; }
.parts .last { border-left: 0; padding-left: 1px; }
.parts li i { width: 8px; height: 8px; border-bottom: 1px dotted #888; }
.parts li span { display: flex; align-items: center; gap: 8px; padding: 0 4px 0 2px; }
.parts li .ico { margin-left: 1px; }
.parts .on span { background: #2f62c8; }
.props { flex: 1; min-width: 0; display: flex; flex-direction: column; margin-left: 3px; }
.ptabs { flex: none; height: 20px; border-bottom: 1px solid #d9d9d9; margin-bottom: -1px; }
.ptabs button { height: 21px; padding: 0 7px 0 6px; border: 1px solid #d9d9d9; border-bottom: 0; background: #fff; }
.pwrap { flex: 1; background: #fff; border-left: 1px solid #d9d9d9; padding: 5px 0 4px 4px; margin-bottom: 2px; }
table { width: 100%; border-collapse: separate; border-spacing: 0; border-top: 1px solid #909090; border-left: 1px solid #a0a0a0; }
th { height: 22px; padding: 0; border: solid #c0c0c0; border-width: 0 1px 1px 0; background: linear-gradient(#fff, #eee); font-weight: normal; }
td { height: 18px; padding: 0; border: solid #c0c0c0; border-width: 0 1px 1px 0; }
.no { width: 19px; text-align: center; }
td.no { background: #f4f4f4; font: 11px/16px "Noto Sans", sans-serif; }
.name { position: relative; padding-left: 20px; }
.key .name { color: #0000ff; }
.dim .name { color: #808080; }
.sel .name { background: #0078d7; color: #fff; }
.sel .no { background: #ffd58a; }
.sub .name { padding-left: 30px; }
.box { position: absolute; left: 3px; top: 3px; width: 10px; height: 10px; border: 1px solid #b0b0b0; background: linear-gradient(#222, #222) 2px 5px / 7px 1px no-repeat; }
.plus { background: linear-gradient(#222, #222) 2px 5px / 7px 1px no-repeat, linear-gradient(#222, #222) 5px 2px / 1px 7px no-repeat; }
.branch { position: absolute; left: 9px; top: 0; width: 16px; height: 19px; border-left: 1px solid #c0c0c0; background: linear-gradient(#c0c0c0, #c0c0c0) 0 9px / 16px 1px no-repeat; }
.end .branch { height: 10px; }

.editor { flex: 1; min-width: 0; display: flex; flex-direction: column; border-left: 1px solid #25324a; box-shadow: inset 4px 0 #b9d1ea; padding-left: 5px; }
h2 { flex: none; height: 27px; margin: 0 0 0 -5px; padding-left: 6px; background: linear-gradient(#99b4d1, #b9d1ea); font: inherit; line-height: 30px; }
.etabs { flex: none; display: flex; align-items: flex-end; height: 21px; padding-left: 3px; border-bottom: 1px solid #d0d0d0; }
.etabs button { height: 19px; padding: 0 16px 0 5px; border: 1px solid #d9d9d9; border-bottom: 0; }
.etabs .cur { height: 21px; margin-bottom: -1px; padding: 0 18px 2px 6px; background: #fff; }
.etools { flex: none; background: #fff; padding: 2px 0 0 4px; }
.row { display: flex; align-items: center; height: 27px; background: linear-gradient(#fbfbfb, #f2f2f2); }
.info { height: 28px; margin-bottom: 2px; }
.grip { width: 2px; height: 15px; margin: 0 2px 0 5px; background: repeating-linear-gradient(#b0b0b0 0 2px, transparent 2px 4px); }
.row button { height: 23px; padding: 0 5px; box-sizing: border-box; }
.row .cur, .pbody .cur { padding: 0 4px; border: 1px solid #0078d7; background: #dcebf8; }
.row .sep { margin: 0 2px 0 4px; }
.info label { padding-left: 4px; }
.info .pick { width: 133px; height: 23px; margin-left: 1px; border: 1px solid #0078d7; background: #fff; box-shadow: inset -12px 0 #e3effa; }
.info .caret { right: 3px; }
.canvas { flex: 1; min-height: 0; position: relative; margin: 0 1px 0 6px; border: 2px solid #f00; border-right: 0; background: #000; overflow: hidden; }
.drawing { position: absolute; inset: 0; width: 100%; height: 100%; }
.axis { fill: none; stroke: #333; stroke-dasharray: 14 3 5 3; shape-rendering: crispEdges; }
.axis .main { stroke: #606060; }
.wallline { fill: none; stroke: #fff; stroke-width: 3; shape-rendering: crispEdges; }
.lead { stroke: #fff; }
.dim { fill: none; stroke: #0f0; stroke-width: 2; }
.stirrup { fill: none; stroke: #f00; stroke-width: 4; }
.num { fill: #fff; text-anchor: middle; font: 23px "Liberation Serif", serif; }
.origin { fill: #555; font: 9px "Liberation Sans", sans-serif; }
.notes { fill: #fff; font: 300 22px "Noto Sans CJK SC", sans-serif; }
.spec { fill: #0f0; font: 20px "Liberation Mono", monospace; }
.palette { position: absolute; left: 8px; top: 2px; width: 198px; border: 1px solid #303030; background: #fff; padding-top: 7px; }
.ptitle { height: 21px; padding-left: 2px; line-height: 20px; background: #a0a0a0; color: #fff; }
.pbody { display: flex; align-items: center; height: 26px; background: #f8f8f8; }
.pbody button { gap: 8px; height: 23px; padding: 0 5px; box-sizing: border-box; }
.pbody .pick { width: 56px; height: 21px; margin-left: auto; margin-right: 1px; border: 1px solid #707070; color: #777; }
.estatus { flex: none; display: grid; grid-template-columns: 151px 1fr; height: 20px; margin-top: 7px; margin-left: -1px; background: #f4f4f4; border-bottom: 1px solid #fff; }
.estatus > * { border: 1px solid #d4d4d4; border-width: 1px 1px 0; line-height: 20px; padding-left: 1px; margin-right: 2px; }
.estatus > .half { padding-left: 9px; line-height: 20px; }

.status { flex: none; display: grid; grid-template-columns: 149px 81px 99px 50px 1fr 70px; height: 21px; background: #f7f7f7; border-top: 1px solid #fff; box-sizing: border-box; }
.status > * { border: 1px solid #d0d0d0; border-left-color: #fff; padding-left: 2px; line-height: 18px; margin-right: 1px; }

.taskbar { flex: none; display: flex; height: 40px; background: #020b0e; color: #fff; }
.start { width: 48px; justify-content: center; background: #000; }
.tsearch { display: flex; align-items: center; box-sizing: border-box; width: 344px; padding: 0 12px 0 9px; background: #333; }
.cortana { box-sizing: border-box; width: 21px; height: 21px; border: 3px solid #f0f0f0; border-radius: 50%; }
.tsearch input { flex: 1; min-width: 0; border: 0; padding: 0 6px; background: none; font-size: 14px; }
.tsearch input::placeholder { color: #a0a0a0; opacity: 1; }
.apps { display: flex; }
.apps button { width: 50px; justify-content: center; border: 0 solid #76b9ed; box-sizing: border-box; }
.apps .run { border-width: 3px 0; border-top-color: transparent; background-clip: padding-box; }
.apps .now { background: #3a4347; border-top-color: #3a4347; width: 48px; }
.tray { flex: 1; display: flex; align-items: center; justify-content: flex-end; gap: 7px; }
.two { text-align: center; line-height: 17px; }
.link { margin-right: 14px; }
.cpu { margin-right: 12px; }
.up { margin-right: 4px; }
.lang { font: 20px "Noto Sans", sans-serif; margin: 0 4px; }
.clock { margin: 0 12px 0 14px; }
.bell { position: relative; padding-right: 18px; margin-right: 4px; border-right: 1px solid #555; height: 40px; display: flex; align-items: center; }
.bell b { position: absolute; left: 8px; top: 19px; width: 14px; height: 14px; border: 1px solid #888; border-radius: 50%; background: #222; font-size: 11px; line-height: 14px; text-align: center; }
</style>
